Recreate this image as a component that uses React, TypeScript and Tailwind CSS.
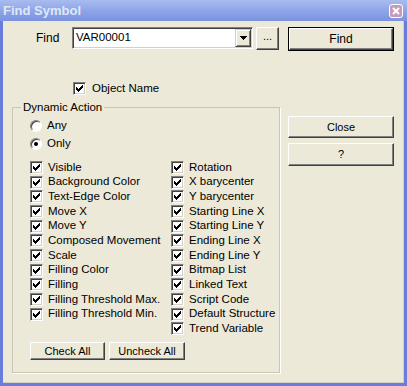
import React from 'react';

const FONT = "font-['Liberation_Sans',Arial,sans-serif]";

const CHECK_ROWS = ['......#', '.....##', '#...###', '##.###.', '#####..', '.###...', '..#....'];
const checkPath = CHECK_ROWS.map((row, y) =>
  row.split('').map((c, x) => (c === '#' ? `M${x} ${y}h1v1h-1z` : '')).join('')
).join('');

const Check = () => (
  <span className="flex h-[13px] w-[13px] shrink-0 items-center justify-center border border-t-[#808080] border-l-[#808080] border-r-white border-b-white bg-white shadow-[inset_1px_1px_0_#404040,inset_-1px_-1px_0_#d4d0c8]">
    <svg width="7" height="7" viewBox="0 0 7 7" shapeRendering="crispEdges">
      <path d={checkPath} fill="#000" />
    </svg>
  </span>
);

const Radio = ({ on }: { on?: boolean }) => (
  <span className="flex h-[12px] w-[12px] shrink-0 items-center justify-center rounded-full border border-t-[#808080] border-l-[#808080] border-r-white border-b-white bg-white shadow-[inset_1px_1px_0_#404040]">
    {on && <span className="h-[4px] w-[4px] rounded-full bg-black" />}
  </span>
);

const Btn = ({ children, className = '' }: { children: React.ReactNode; className?: string }) => (
  <button
    type="button"
    className={`flex items-center justify-center border border-t-white border-l-white border-r-[#404040] border-b-[#404040] bg-[#ece9d8] text-[11px] text-black shadow-[inset_-1px_-1px_0_#808080] ${className}`}
  >
    {children}
  </button>
);

const leftItems = [
  'Visible',
  'Background Color',
  'Text-Edge Color',
  'Move X',
  'Move Y',
  'Composed Movement',
  'Scale',
  'Filling Color',
  'Filling',
  'Filling Threshold Max.',
  'Filling Threshold Min.',
];

const rightItems = [
  'Rotation',
  'X barycenter',
  'Y barycenter',
  'Starting Line X',
  'Starting Line Y',
  'Ending Line X',
  'Ending Line Y',
  'Bitmap List',
  'Linked Text',
  'Script Code',
  'Default Structure',
  'Trend Variable',
];

const CheckRow = ({ label }: { label: string }) => (
  <div className="flex h-[14.7px] items-center gap-[5px]">
    <Check />
    <span className="leading-none">{label}</span>
  </div>
);

export default function App() {
  return (
    <div className={`flex h-[386px] w-[407px] flex-col bg-[#6a7ddc] text-[11px] text-black ${FONT}`}>
      <div className="flex h-[21px] shrink-0 items-center justify-between bg-gradient-to-b from-[#a9bcf0] via-[#8ea5e7] to-[#7b93df] pl-[3px] pr-[4px]">
        <span className="text-[13px] font-bold text-[#dfe8f9]">Find Symbol</span>
        <span className="flex h-[14px] w-[14px] items-center justify-center rounded-[3px] border border-white bg-[#c59bbd]">
          <svg width="8" height="8" viewBox="0 0 8 8">
            <path d="M1 1L7 7M7 1L1 7" stroke="#fff" strokeWidth="2" />
          </svg>
        </span>
      </div>

      <div className="mx-[3px] mb-[3px] flex flex-1 border-r border-b border-[#d4d0c8] bg-[#ece9d8]">
        <div className="flex w-[282px] flex-col">
          <div className="mt-[6px] flex h-[22px] items-center">
            <span className="ml-[33px] w-[36px] text-[12px]">Find</span>
            <div className="flex h-[22px] w-[181px] items-center border border-t-[#808080] border-l-[#808080] border-r-white border-b-white bg-white shadow-[inset_1px_1px_0_#404040,inset_-1px_-1px_0_#d4d0c8]">
              <span className="ml-[3px] flex-1 text-[11.5px]">VAR00001</span>
              <span className="mr-[1px] flex h-[18px] w-[16px] items-center justify-center border border-t-[#d4d0c8] border-l-[#d4d0c8] border-r-[#404040] border-b-[#404040] bg-[#ece9d8] shadow-[inset_1px_1px_0_white,inset_-1px_-1px_0_#808080]">
                <svg width="7" height="4" viewBox="0 0 7 4" shapeRendering="crispEdges">
                  <path d="M0 0h7v1h-1v1h-1v1h-1v1h-1v-1h-1v-1h-1v-1h-1z" fill="#000" />
                </svg>
              </span>
            </div>
            <Btn className="ml-[3px] h-[23px] w-[23px] pb-[4px]">...</Btn>
          </div>

          <div className="ml-[70px] mt-[33px] flex h-[13px] items-center gap-[6px]">
            <Check />
            <span className="text-[11.5px]">Object Name</span>
          </div>

          <fieldset className="ml-[9px] mt-[6px] h-[272px] w-[268px] border border-[#c9c6b6] shadow-[1px_1px_0_white]">
            <legend className="ml-[8px] px-[2px] text-[11.5px] leading-[13px]">Dynamic Action</legend>
            <div className="pl-[17px] text-[11.5px]">
              <div className="mt-[6px] flex h-[12px] items-center gap-[5px]">
                <Radio />
                <span>Any</span>
              </div>
              <div className="mt-[6px] flex h-[12px] items-center gap-[5px]">
                <Radio on />
                <span>Only</span>
              </div>
              <div className="mt-[10px] flex">
                <div className="flex w-[141px] flex-col">
                  {leftItems.map(l => (
                    <CheckRow key={l} label={l} />
                  ))}
                </div>
                <div className="flex flex-col">
                  {rightItems.map(l => (
                    <CheckRow key={l} label={l} />
                  ))}
                </div>
              </div>
              <div className="mt-[6px] flex gap-[4px]">
                <Btn className="h-[18px] w-[75px] text-[11.5px]">Check All</Btn>
                <Btn className="h-[18px] w-[76px] text-[11.5px]">Uncheck All</Btn>
              </div>
            </div>
          </fieldset>
        </div>

        <div className="ml-[3px] flex flex-col">
          <div className="mt-[6px] border border-black">
            <Btn className="h-[22px] w-[104px] text-[12px]">Find</Btn>
          </div>
          <Btn className="mt-[65px] h-[22px] w-[106px] text-[11.5px]">Close</Btn>
          <Btn className="mt-[5px] h-[23px] w-[106px] text-[11.5px]">?</Btn>
        </div>
      </div>
    </div>
  );
}
